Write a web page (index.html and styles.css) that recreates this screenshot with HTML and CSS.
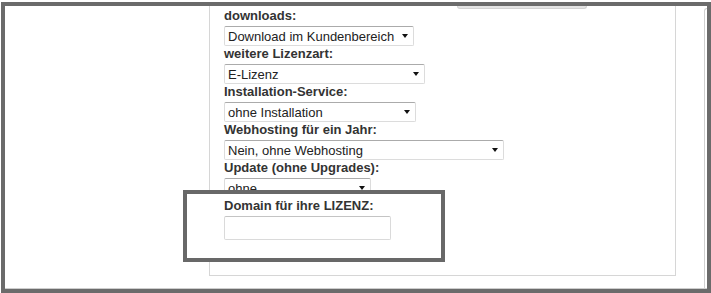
FILE: index.html
```html
<!DOCTYPE html>
<html lang="de">
<head>
    <meta charset="UTF-8">
    <meta name="viewport" content="width=device-width, initial-scale=1.0">
    <title>Lizenz-Optionen</title>
    <link rel="stylesheet" href="styles.css">
</head>
<body>
    <div class="frame">
        <!-- bottom edge of the tab above -->
        <div class="top-tab"></div>

        <div class="panel">
            <form class="options">
                <label class="opt-label" for="downloads">downloads:</label>
                <div class="select-wrap size-downloads">
                    <select id="downloads">
                        <option>Download im Kundenbereich</option>
                    </select>
                </div>

                <label class="opt-label" for="lizenzart">weitere Lizenzart:</label>
                <div class="select-wrap size-lizenz">
                    <select id="lizenzart">
                        <option>E-Lizenz</option>
                    </select>
                </div>

                <label class="opt-label" for="installation">Installation-Service:</label>
                <div class="select-wrap size-install">
                    <select id="installation">
                        <option>ohne Installation</option>
                    </select>
                </div>

                <label class="opt-label" for="webhosting">Webhosting für ein Jahr:</label>
                <div class="select-wrap size-webhosting">
                    <select id="webhosting">
                        <option>Nein, ohne Webhosting</option>
                    </select>
                </div>

                <label class="opt-label" for="update">Update (ohne Upgrades):</label>
                <div class="select-wrap size-update">
                    <select id="update">
                        <option>ohne</option>
                    </select>
                </div>

                <div class="domain-field">
                    <label class="opt-label" for="domain">Domain für ihre LIZENZ:</label>
                    <input type="text" id="domain" class="text-input">
                </div>
            </form>
        </div>

        <div class="scroll-edge"></div>

        <!-- highlight box drawn over the form -->
        <div class="highlight"></div>
    </div>
</body>
</html>
```

FILE: styles.css
```css
body {
    margin: 0;
    padding: 0;
    background-color: #fff;
    font-family: "Liberation Sans", Arial, sans-serif;
}

.frame {
    position: relative;
    display: flex;
    box-sizing: border-box;
    width: 710px;
    height: 291px;
    margin: 2px 0 0 1px;
    border: 4px solid #6b6b6b;
    background-color: #fff;
    box-shadow: inset 0 -1px 0 #cdcdcd;
}

.top-tab {
    position: absolute;
    top: 0;
    left: 452px;
    width: 130px;
    height: 3px;
    box-sizing: border-box;
    background-color: #e4e4e4;
    border: 1px solid #d2d2d2;
    border-top: none;
    border-radius: 0 0 3px 3px;
    z-index: 1;
}

.panel {
    box-sizing: border-box;
    width: 467px;
    height: 270px;
    margin-left: 204px;
    padding: 2px 0 0 14px;
    border: 1px solid #d6d6d6;
    border-top: none;
}

.scroll-edge {
    width: 2px;
    margin: 2px 0 1px auto;
    border-left: 1px solid #d0d0d0;
    border-top: 1px solid #d0d0d0;
    border-top-left-radius: 3px;
}

.opt-label {
    display: block;
    height: 16px;
    margin-bottom: 2px;
    font-size: 13px;
    line-height: 16px;
    font-weight: bold;
    color: #333;
}

.select-wrap {
    position: relative;
    width: 190px;
}

.select-wrap::after {
    content: "";
    position: absolute;
    right: 6px;
    top: 8px;
    border-left: 3.5px solid transparent;
    border-right: 3.5px solid transparent;
    border-top: 4px solid #111;
    pointer-events: none;
}

.select-wrap select {
    -webkit-appearance: none;
    appearance: none;
    display: block;
    box-sizing: border-box;
    width: 100%;
    height: 20px;
    margin: 0;
    padding: 0 16px 0 3px;
    font-family: "Liberation Sans", Arial, sans-serif;
    font-size: 13px;
    color: #222;
    background-color: #fff;
    border: 1px solid #dcdcdc;
    border-top-color: #ababab;
    border-radius: 2px;
}

.size-downloads { width: 190px; }
.size-lizenz { width: 201px; }
.size-install { width: 192px; }
.size-webhosting { width: 280px; }
.size-update { width: 147px; }

.domain-field {
    position: relative;
    z-index: 2;
}

.text-input {
    display: block;
    box-sizing: border-box;
    width: 167px;
    height: 24px;
    margin: 0;
    padding: 0 3px;
    font-family: "Liberation Sans", Arial, sans-serif;
    font-size: 13px;
    border: 1px solid #dadada;
    border-top-color: #c4c4c4;
    border-radius: 2px;
    background-color: #fff;
}

.highlight {
    position: absolute;
    left: 178px;
    top: 184px;
    width: 262px;
    height: 72px;
    box-sizing: border-box;
    border: 4px solid #686868;
    background-color: #fff;
    z-index: 1;
}
```
